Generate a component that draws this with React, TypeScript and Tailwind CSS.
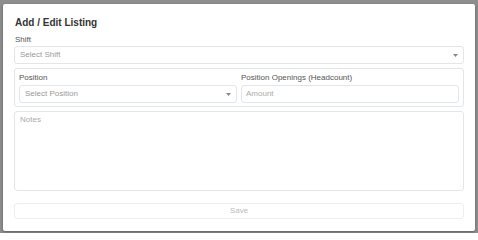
import React from 'react';

const Caret = () => (
  <svg width="5" height="3" viewBox="0 0 5 3" className="shrink-0">
    <path d="M0 0 L5 0 L2.5 3 Z" fill="#888" />
  </svg>
);

const App = () => {
  return (
    <div className="w-[478px] h-[233px] bg-[#8e8e8e] pt-[4px] pl-[3px] overflow-hidden" style={{ fontFamily: '"Liberation Sans", Arial, sans-serif' }}>
      <div className="w-[472px] h-[227px] bg-white rounded-[2px] shadow-[0_1px_3px_rgba(0,0,0,0.35)] px-[11px] pt-[12px]">
        <h2 className="pl-[1px] text-[10px] leading-[13px] font-bold text-[#333]">Add / Edit Listing</h2>
        <div className="pl-[1px] mt-[6px] text-[8px] leading-[10px] text-[#555]">Shift</div>
        <div className="mt-[1px] h-[18px] border border-[#e3e6e8] rounded-[3px] flex items-center justify-between pl-[5px] pr-[5px]">
          <span className="text-[8px] leading-[10px] text-[#999]">Select Shift</span>
          <Caret />
        </div>
        <div className="mt-[4px] h-[39px] border border-[#e3e6e8] rounded-[3px] px-[4px] pt-[4px] flex gap-[4px]">
          <div className="flex-1 flex flex-col">
            <div className="text-[8px] leading-[10px] text-[#555]">Position</div>
            <div className="mt-[2px] h-[18px] border border-[#e3e6e8] rounded-[3px] flex items-center justify-between pl-[5px] pr-[5px]">
              <span className="text-[8px] leading-[10px] text-[#999]">Select Position</span>
              <Caret />
            </div>
          </div>
          <div className="flex-1 flex flex-col">
            <div className="text-[8px] leading-[10px] text-[#555]">Position Openings (Headcount)</div>
            <div className="mt-[2px] h-[18px] border border-[#e3e6e8] rounded-[3px] flex items-center pl-[4px]">
              <span className="text-[8px] leading-[10px] text-[#aaa]">Amount</span>
            </div>
          </div>
        </div>
        <div className="mt-[4px] h-[80px] border border-[#e3e6e8] rounded-[3px] px-[5px] pt-[3px]">
          <div className="text-[8px] leading-[10px] text-[#aaa]">Notes</div>
        </div>
        <div className="mt-[12px] h-[16px] border border-[#eceef0] rounded-[3px] flex items-center justify-center">
          <span className="text-[8px] leading-[10px] text-[#bbb]">Save</span>
        </div>
      </div>
    </div>
  );
};

export default App;
